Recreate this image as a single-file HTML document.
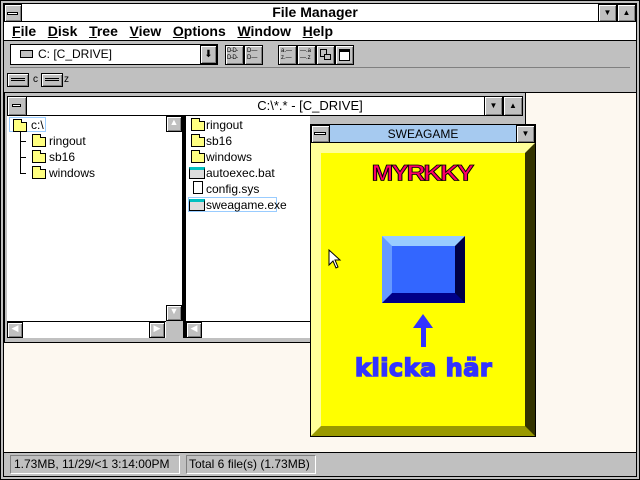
<!DOCTYPE html>
<html><head><style>
*{margin:0;padding:0;box-sizing:border-box}
body{width:640px;height:480px;position:relative;overflow:hidden;background:#c0c0c0;font-family:"Liberation Sans",sans-serif;font-size:12px}
.a{position:absolute}
.btn{position:absolute;background:#c0c0c0;border:1px solid #000;box-shadow:inset 1px 1px 0 #fff,inset -1px -1px 0 #808080;overflow:hidden}
.t{position:absolute;white-space:nowrap}
.fold{position:absolute;width:14px;height:10px;background:#ffff80;border:1px solid #000}
.fold:before{content:"";position:absolute;left:-1px;top:-4px;width:7px;height:3px;border:1px solid #000;border-bottom:none;background:#ffff80}
.ln{position:absolute;height:1px;background:#000}
.drv{position:absolute;width:22px;height:14px;background:#c0c0c0;border:1px solid #000;box-shadow:inset 1px 1px 0 #fff,inset -1px -1px 0 #808080}
.drv:before{content:"";position:absolute;left:3px;top:4px;width:14px;height:1px;background:#000;box-shadow:0 2px 0 #000}
</style></head><body>
<div class="a" style="left:0;top:0;width:640px;height:480px;border:1px solid #000;background:#c0c0c0"></div>
<div class="a" style="left:3px;top:3px;width:634px;height:474px;border:1px solid #000"></div>
<div class="a" style="left:4px;top:4px;width:632px;height:18px;background:#fff;border-bottom:1px solid #000"></div>
<div class="btn" style="left:4px;top:4px;width:18px;height:18px"></div>
<div class="a" style="left:7px;top:12px;width:11px;height:3px;border:1px solid #000;background:#fff"></div>
<div class="t" style="left:0;width:630px;top:4px;text-align:center;font-weight:bold;font-size:14px">File Manager</div>
<div class="btn" style="left:598px;top:4px;width:19px;height:18px;font-size:8px;text-align:center;line-height:16px">▼</div>
<div class="btn" style="left:617px;top:4px;width:19px;height:18px;font-size:8px;text-align:center;line-height:16px">▲</div>
<div class="a" style="left:4px;top:22px;width:632px;height:19px;background:#fff;border-bottom:1px solid #000"></div>
<div class="t" style="left:12px;top:23px;font-size:14px;font-weight:bold"><u>F</u>ile&nbsp;&nbsp; <u>D</u>isk&nbsp;&nbsp; <u>T</u>ree&nbsp;&nbsp; <u>V</u>iew&nbsp;&nbsp; <u>O</u>ptions&nbsp;&nbsp; <u>W</u>indow&nbsp;&nbsp; <u>H</u>elp</div>
<div class="a" style="left:10px;top:44px;width:208px;height:21px;background:#fff;border:1px solid #000"></div>
<div class="a" style="left:20px;top:50px;width:13px;height:8px;border:1px solid #000;background:#c0c0c0"></div>
<div class="t" style="left:38px;top:47px">C: [C_DRIVE]</div>
<div class="btn" style="left:200px;top:45px;width:17px;height:19px;text-align:center;font-size:10px;line-height:17px">⬇</div>
<div class="btn" style="left:225px;top:45px;width:19px;height:20px;font-size:6px;line-height:7px;padding:2px 1px;letter-spacing:-0.5px">D-D-<br>D-D-</div>
<div class="btn" style="left:244px;top:45px;width:19px;height:20px;font-size:6px;line-height:7px;padding:2px 2px">D—<br>D—</div>
<div class="btn" style="left:278px;top:45px;width:19px;height:20px;font-size:6px;line-height:7px;padding:2px 2px">a.—<br>z.—</div>
<div class="btn" style="left:297px;top:45px;width:19px;height:20px;font-size:6px;line-height:7px;padding:2px 2px">—.a<br>—.z</div>
<div class="btn" style="left:316px;top:45px;width:19px;height:20px"></div>
<div class="a" style="left:320px;top:49px;width:7px;height:8px;border:1px solid #000"></div>
<div class="a" style="left:324px;top:54px;width:7px;height:6px;border:1px solid #000;background:#c0c0c0"></div>
<div class="btn" style="left:335px;top:45px;width:19px;height:20px"></div>
<div class="a" style="left:339px;top:49px;width:11px;height:12px;border:1px solid #000;border-top:3px solid #000;background:#fff"></div>
<div class="a" style="left:10px;top:67px;width:620px;height:1px;background:#808080"></div>
<div class="drv" style="left:7px;top:73px"></div>
<div class="t" style="left:33px;top:74px;font-size:10px">c</div>
<div class="drv" style="left:41px;top:73px"></div>
<div class="t" style="left:64px;top:74px;font-size:10px">z</div>
<div class="a" style="left:4px;top:92px;width:632px;height:360px;background:#fdf8f0;border-top:1px solid #000"></div>
<div class="a" style="left:4px;top:92px;width:522px;height:251px;background:#c0c0c0;border:1px solid #000"></div>
<div class="a" style="left:7px;top:96px;width:516px;height:20px;background:#fff;border:1px solid #000"></div>
<div class="btn" style="left:7px;top:96px;width:20px;height:20px"></div>
<div class="a" style="left:12px;top:104px;width:9px;height:3px;border:1px solid #000;background:#fff"></div>
<div class="t" style="left:150px;width:320px;top:98px;text-align:center;font-size:13px">C:\*.* - [C_DRIVE]</div>
<div class="btn" style="left:484px;top:96px;width:19px;height:20px;font-size:8px;text-align:center;line-height:18px">▼</div>
<div class="btn" style="left:503px;top:96px;width:20px;height:20px;font-size:8px;text-align:center;line-height:18px">▲</div>
<div class="a" style="left:7px;top:116px;width:159px;height:205px;background:#fff;border-right:1px solid #000"></div>
<div class="a" style="left:165px;top:116px;width:18px;height:205px;background:#fff;border-right:1px solid #000"></div>
<div class="btn" style="left:166px;top:116px;width:16px;height:16px;font-size:9px;text-align:center;color:#fff">▲</div>
<div class="btn" style="left:166px;top:305px;width:16px;height:16px;font-size:9px;text-align:center;color:#fff">▼</div>
<div class="a" style="left:183px;top:116px;width:3px;height:222px;background:#000"></div>
<div class="a" style="left:9px;top:117px;width:37px;height:15px;border:1px solid #99ccff"></div>
<div class="fold" style="left:13px;top:122px"></div>
<div class="t" style="left:31px;top:118px">c:\</div>
<div class="a" style="left:20px;top:132px;width:1px;height:41px;background:#000"></div>
<div class="ln" style="left:20px;top:141px;width:6px"></div>
<div class="ln" style="left:20px;top:157px;width:6px"></div>
<div class="ln" style="left:20px;top:173px;width:6px"></div>
<div class="fold" style="left:32px;top:137px"></div><div class="t" style="left:49px;top:134px">ringout</div>
<div class="fold" style="left:32px;top:153px"></div><div class="t" style="left:49px;top:150px">sb16</div>
<div class="fold" style="left:32px;top:169px"></div><div class="t" style="left:49px;top:166px">windows</div>
<div class="a" style="left:186px;top:116px;width:124px;height:205px;background:#fff"></div>
<div class="fold" style="left:191px;top:121px"></div><div class="t" style="left:206px;top:118px">ringout</div>
<div class="fold" style="left:191px;top:137px"></div><div class="t" style="left:206px;top:134px">sb16</div>
<div class="fold" style="left:191px;top:153px"></div><div class="t" style="left:206px;top:150px">windows</div>
<div class="a" style="left:189px;top:167px;width:16px;height:12px;border:1px solid #000;border-top:3px solid #00c0c0;background:#ddd"></div><div class="t" style="left:206px;top:166px">autoexec.bat</div>
<div class="a" style="left:193px;top:181px;width:10px;height:13px;border:1px solid #000;background:#fff"></div><div class="t" style="left:206px;top:182px">config.sys</div>
<div class="a" style="left:188px;top:197px;width:89px;height:15px;border:1px solid #99ccff"></div>
<div class="a" style="left:189px;top:199px;width:16px;height:12px;border:1px solid #000;border-top:3px solid #00c0c0;background:#ddd"></div><div class="t" style="left:206px;top:198px">sweagame.exe</div>
<div class="a" style="left:7px;top:321px;width:159px;height:17px;background:#fff;border-top:1px solid #000"></div>
<div class="btn" style="left:7px;top:322px;width:16px;height:16px;font-size:9px;color:#fff;text-align:center">◀</div>
<div class="btn" style="left:149px;top:322px;width:16px;height:16px;font-size:9px;color:#fff;text-align:center">▶</div>
<div class="a" style="left:186px;top:321px;width:124px;height:17px;background:#fff;border-top:1px solid #000"></div>
<div class="btn" style="left:186px;top:322px;width:16px;height:16px;font-size:9px;color:#fff;text-align:center">◀</div>
<div class="a" style="left:310px;top:124px;width:226px;height:313px;border:1px solid #000;background:#ffff00"></div>
<div class="a" style="left:311px;top:125px;width:224px;height:18px;background:#a6caf0;border-bottom:1px solid #000"></div>
<div class="btn" style="left:311px;top:125px;width:19px;height:18px"></div>
<div class="a" style="left:314px;top:132px;width:12px;height:3px;border:1px solid #000;background:#fff"></div>
<div class="t" style="left:330px;width:186px;top:127px;text-align:center;font-size:12px">SWEAGAME</div>
<div class="btn" style="left:516px;top:125px;width:19px;height:18px;font-size:8px;text-align:center;line-height:16px">▼</div>
<div class="a" style="left:311px;top:143px;width:224px;height:293px;background:#ffff00;border-style:solid;border-width:10px;border-color:#ffff99 #333300 #999900 #ffff99"></div>
<div class="t" style="left:363px;top:158px;width:118px;text-align:center;font-size:26px;font-weight:bold;color:#ff0066;letter-spacing:-2px;-webkit-text-stroke:1px #000;transform:scaleY(0.85)">MYRKKY</div>
<div class="a" style="left:382px;top:236px;width:83px;height:67px;border-style:solid;border-width:10px;border-color:#99ccff #000044 #000088 #6699ff;background:#3366ff"></div>
<div class="a" style="left:421px;top:327px;width:5px;height:20px;background:#3333ff"></div>
<div class="a" style="left:413px;top:314px;width:0;height:0;border-left:10px solid transparent;border-right:10px solid transparent;border-bottom:14px solid #3333ff"></div>
<div class="t" style="left:355px;top:354px;font-size:24px;font-family:'DejaVu Sans',sans-serif;font-weight:bold;color:#3333ff;-webkit-text-stroke:1.5px #3333ff;letter-spacing:0.5px">klicka här</div>
<svg class="a" style="left:328px;top:249px" width="14" height="22" viewBox="0 0 14 22"><path d="M1 1 L1 16 L5 12 L8 19 L10 18 L7 11 L12 11 Z" fill="#fff" stroke="#000" stroke-width="1"/></svg>
<div class="a" style="left:4px;top:452px;width:632px;height:1px;background:#000"></div>
<div class="a" style="left:10px;top:455px;width:170px;height:19px;border:1px solid;border-color:#808080 #fff #fff #808080"></div>
<div class="t" style="left:14px;top:457px">1.73MB, 11/29/&lt;1 3:14:00PM</div>
<div class="a" style="left:186px;top:455px;width:130px;height:19px;border:1px solid;border-color:#808080 #fff #fff #808080"></div>
<div class="t" style="left:189px;top:457px">Total 6 file(s) (1.73MB)</div>
</body></html>
